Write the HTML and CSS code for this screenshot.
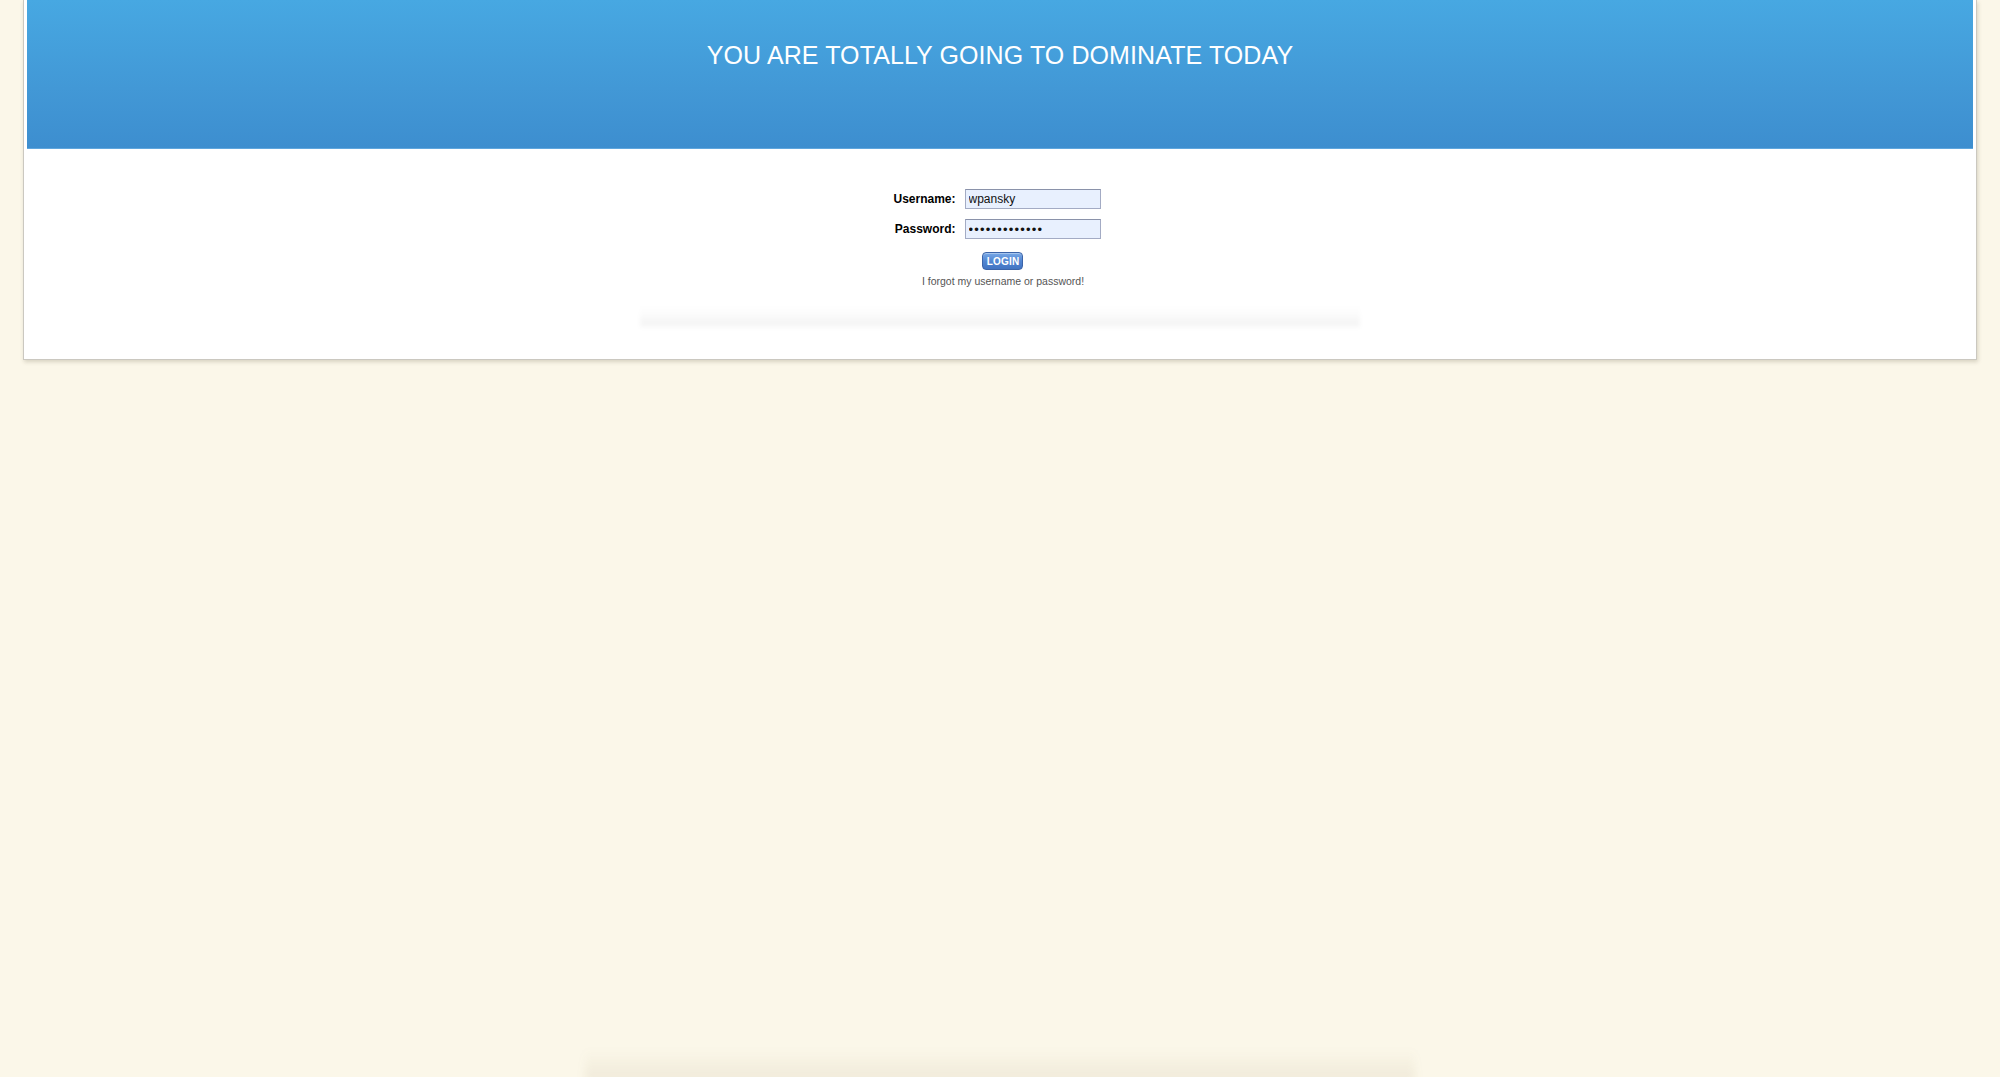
FILE: index.html
```html
<!DOCTYPE html>
<html lang="en">
<head>
<meta charset="utf-8">
<title>Login</title>
<link rel="stylesheet" href="styles.css">
</head>
<body>
<div class="page">
  <div class="container">
    <div class="header">
      <h1 class="title">YOU ARE TOTALLY GOING TO DOMINATE TODAY</h1>
    </div>
    <div class="content">
      <form class="login-form">
        <div class="fields">
          <label class="label" for="u">Username:</label>
          <input class="field" id="u" type="text" value="wpansky">
          <label class="label" for="p">Password:</label>
          <input class="field field-pass" id="p" type="password" value="wpanskypasswd">
        </div>
        <div class="actions">
          <button class="login-btn" type="button">LOGIN</button>
          <a class="forgot" href="#">I forgot my username or password!</a>
        </div>
      </form>
      <div class="soft-shadow"></div>
    </div>
  </div>
  <div class="spacer"></div>
  <div class="floor-shadow"></div>
</div>
</body>
</html>
```
FILE: styles.css
```css
html, body {
  margin: 0;
  padding: 0;
  height: 100%;
}
body {
  background: #fbf7e9;
  font-family: "Liberation Sans", Arial, Helvetica, sans-serif;
  overflow: hidden;
}
.page {
  height: 100vh;
  display: flex;
  flex-direction: column;
}
.container {
  margin: 0 23px;
  background: #fff;
  border: 1px solid #cbc8c0;
  border-top: none;
  padding: 0 3px 30px;
  box-shadow: 1px 2px 4px rgba(90, 80, 60, 0.22);
}
.header {
  box-sizing: border-box;
  height: 149px;
  background: linear-gradient(to bottom, #47a8e2 0%, #4298d6 60%, #3d8ecf 100%);
  border-bottom: 1px solid #5fa6dd;
  padding-top: 41px;
}
.title {
  margin: 0;
  text-align: center;
  color: #fff;
  font-size: 25px;
  font-weight: normal;
  line-height: 29px;
  letter-spacing: 0.1px;
}
.content {
  padding-top: 40px;
  display: flex;
  flex-direction: column;
  align-items: center;
}
.login-form {
  display: flex;
  flex-direction: column;
  align-items: center;
}
.fields {
  display: grid;
  grid-template-columns: auto 136px;
  column-gap: 9px;
  row-gap: 10px;
  margin-right: 6px;
}
.label {
  font-size: 12px;
  font-weight: bold;
  line-height: 20px;
  text-align: right;
  color: #000;
}
.field {
  box-sizing: border-box;
  height: 20px;
  width: 136px;
  margin: 0;
  padding: 0 3px;
  border: 1px solid #a3abc4;
  border-top-color: #8a92aa;
  background: #e8f0fe;
  font-family: "Liberation Sans", Arial, sans-serif;
  font-size: 12px;
  color: #111;
  outline: none;
}
.field-pass {
  letter-spacing: 1.2px;
  font-size: 13px;
}
.actions {
  display: flex;
  flex-direction: column;
  align-items: center;
  padding-left: 6px;
}
.login-btn {
  margin-top: 13px;
  height: 18px;
  width: 41px;
  padding: 0;
  border: 1px solid #3c64a8;
  border-radius: 4px;
  background: linear-gradient(to bottom, #79a9e6 0%, #5286d2 50%, #4274c2 100%);
  color: #fff;
  font-family: "Liberation Sans", Arial, sans-serif;
  font-size: 10px;
  font-weight: bold;
  letter-spacing: 0.2px;
  box-shadow: inset 0 1px 0 rgba(255,255,255,0.35);
  cursor: pointer;
}
.forgot {
  margin-top: 5px;
  font-size: 10.5px;
  line-height: 13px;
  color: #555;
  text-decoration: none;
}
.soft-shadow {
  margin-top: 17px;
  width: 720px;
  height: 24px;
  background: linear-gradient(to bottom, rgba(0,0,0,0) 0%, rgba(0,0,0,0.012) 35%, rgba(0,0,0,0.045) 80%, rgba(0,0,0,0.0) 100%);
  filter: blur(2px);
}
.spacer {
  flex: 1;
}
.floor-shadow {
  align-self: center;
  width: 830px;
  height: 32px;
  margin-bottom: -4px;
  background: linear-gradient(to bottom, rgba(120,100,50,0) 0%, rgba(120,100,50,0.05) 60%, rgba(120,100,50,0.09) 100%);
  filter: blur(4px);
}
```
